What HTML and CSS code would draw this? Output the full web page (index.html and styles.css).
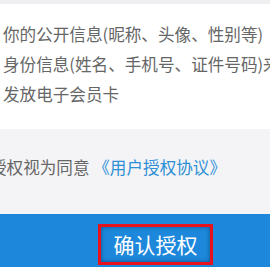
FILE: index.html
```html
<!DOCTYPE html>
<html lang="zh-CN">
  <head>
    <meta charset="UTF-8" />
    <title>授权</title>
    <link rel="stylesheet" href="styles.css">
  </head>
  <body>
    <div class="page">
      <div class="top-strip"></div>
      <div class="info">
        <p class="line">你的公开信息(昵称、头像、性别等)</p>
        <p class="line">身份信息(姓名、手机号、证件号码)来</p>
        <p class="line">发放电子会员卡</p>
      </div>
      <div class="agree">
        <p class="agree-text">授权视为同意 <a class="link" href="#">《用户授权协议》</a></p>
      </div>
      <div class="footer">
        <button class="confirm">确认授权</button>
      </div>
    </div>
  </body>
</html>
```

FILE: styles.css
```css
*{
    box-sizing: border-box;
    margin: 0;
    padding: 0;
}
body{
    font-family: "Noto Sans CJK SC", "Noto Sans", sans-serif;
    background-color: #f4f4f6;
}
.page{
    width: 270px;
    height: 267px;
    overflow: hidden;
    display: flex;
    flex-direction: column;
}
.top-strip{
    height: 4px;
    background-color: #efeff1;
}
.info{
    background-color: #fff;
    padding: 15px 0 20px 3px;
}
.line{
    font-size: 16.6px;
    line-height: 30px;
    color: #666;
    white-space: nowrap;
}
.agree{
    height: 85px;
    padding-top: 23px;
    background-color: #f4f4f6;
}
.agree-text{
    font-size: 16.6px;
    line-height: 30px;
    color: #666;
    white-space: nowrap;
    margin-left: -10px;
}
.link{
    color: #2d8fd5;
    text-decoration: none;
}
.footer{
    flex: 1;
    background-color: #1d88db;
    display: flex;
    align-items: flex-start;
    padding: 10px 0 0 98px;
}
.confirm{
    width: 115px;
    height: 41px;
    border: 3px solid #e8121c;
    background-color: #1d88db;
    box-shadow: inset 0 0 4px rgba(0, 40, 90, 0.6);
    color: #fff;
    font-family: inherit;
    font-size: 21px;
    line-height: 35px;
}
```
